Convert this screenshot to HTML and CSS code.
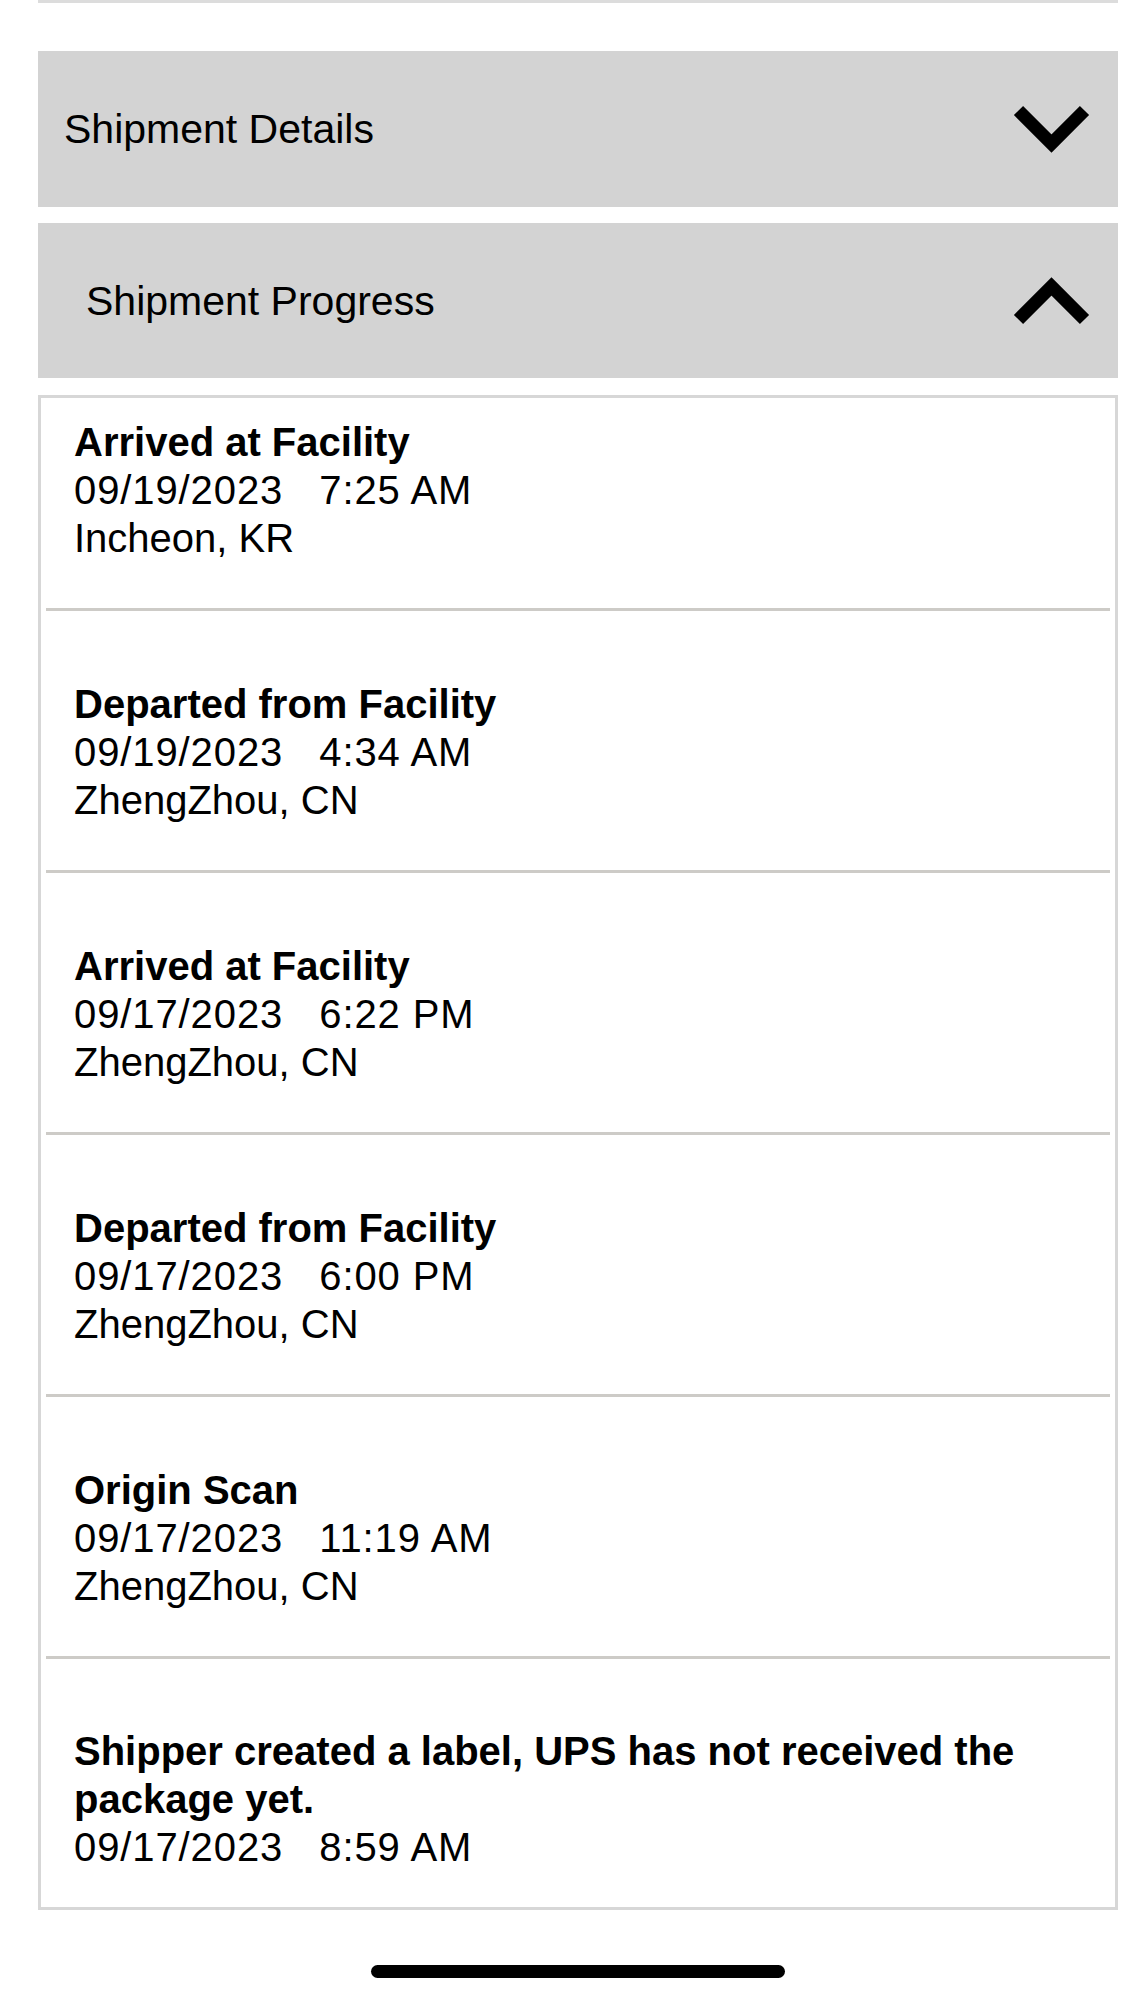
FILE: index.html
```html
<!DOCTYPE html>
<html lang="en">
<head>
<meta charset="utf-8">
<title>Shipment Progress</title>
<link rel="stylesheet" href="styles.css">
</head>
<body>
<div class="page">
  <div class="prev-card"></div>

  <div class="accordion accordion--details">
    <span class="accordion__title">Shipment Details</span>
    <svg class="chevron" viewBox="0 0 77 48" width="77" height="48" aria-hidden="true">
      <polyline points="5.5,5.5 38.5,38.5 71.5,5.5" fill="none" stroke="#000" stroke-width="13" stroke-linecap="butt" stroke-linejoin="miter"/>
    </svg>
  </div>

  <div class="accordion accordion--progress">
    <span class="accordion__title">Shipment Progress</span>
    <svg class="chevron" viewBox="0 0 77 48" width="77" height="48" aria-hidden="true">
      <polyline points="5.5,42.5 38.5,9.5 71.5,42.5" fill="none" stroke="#000" stroke-width="13" stroke-linecap="butt" stroke-linejoin="miter"/>
    </svg>
  </div>

  <div class="events">
    <div class="event event--first">
      <div class="event__title">Arrived at Facility</div>
      <div class="event__date">09/19/2023&nbsp;&nbsp; 7:25 AM</div>
      <div class="event__line">Incheon, KR</div>
    </div>
    <div class="event">
      <div class="event__title">Departed from Facility</div>
      <div class="event__date">09/19/2023&nbsp;&nbsp; 4:34 AM</div>
      <div class="event__line">ZhengZhou, CN</div>
    </div>
    <div class="event">
      <div class="event__title">Arrived at Facility</div>
      <div class="event__date">09/17/2023&nbsp;&nbsp; 6:22 PM</div>
      <div class="event__line">ZhengZhou, CN</div>
    </div>
    <div class="event">
      <div class="event__title">Departed from Facility</div>
      <div class="event__date">09/17/2023&nbsp;&nbsp; 6:00 PM</div>
      <div class="event__line">ZhengZhou, CN</div>
    </div>
    <div class="event">
      <div class="event__title">Origin Scan</div>
      <div class="event__date">09/17/2023&nbsp;&nbsp; 11:19 AM</div>
      <div class="event__line">ZhengZhou, CN</div>
    </div>
    <div class="event event--last">
      <div class="event__title">Shipper created a label, UPS has not received the package yet.</div>
      <div class="event__date">09/17/2023&nbsp;&nbsp; 8:59 AM</div>
    </div>
  </div>

  <div class="home-indicator"></div>
</div>
</body>
</html>
```

FILE: styles.css
```css
* {
  box-sizing: border-box;
}

html, body {
  margin: 0;
  padding: 0;
  background: #ffffff;
}

body {
  font-family: "Liberation Sans", Arial, sans-serif;
  color: #000000;
  width: 1125px;
  height: 2000px;
  overflow: hidden;
}

.page {
  display: flex;
  flex-direction: column;
  padding-left: 38px;
  width: 1118px;
}

.prev-card {
  height: 3px;
  background: #dcdcdc;
}

.accordion {
  display: flex;
  align-items: center;
  justify-content: space-between;
  background: #d3d3d3;
  padding-right: 28px;
  font-size: 41px;
  line-height: 48px;
}

.accordion--details {
  margin-top: 48px;
  height: 156px;
  padding-left: 26px;
}

.accordion--progress {
  margin-top: 16px;
  height: 155px;
  padding-left: 48px;
}

.accordion__title {
  font-weight: 400;
}

.chevron {
  display: block;
  flex: none;
}

.events {
  margin-top: 17px;
  border: 3px solid #d7d7d7;
  display: flex;
  flex-direction: column;
}

.event {
  margin: 0 5px;
  padding: 69px 28px 46px 28px;
  border-bottom: 3px solid #cdcbc7;
  font-size: 40px;
  line-height: 48px;
}

.event--first {
  padding-top: 20px;
}

.event--last {
  padding-top: 68px;
  padding-bottom: 36px;
  border-bottom: none;
}

.event__title {
  font-weight: 700;
}

.event__line {
  font-weight: 400;
}

.event__date {
  font-weight: 400;
  letter-spacing: 0.9px;
  white-space: pre;
}

.home-indicator {
  margin-top: 55px;
  margin-left: 333px;
  width: 414px;
  height: 13px;
  border-radius: 7px;
  background: #000000;
}
```
